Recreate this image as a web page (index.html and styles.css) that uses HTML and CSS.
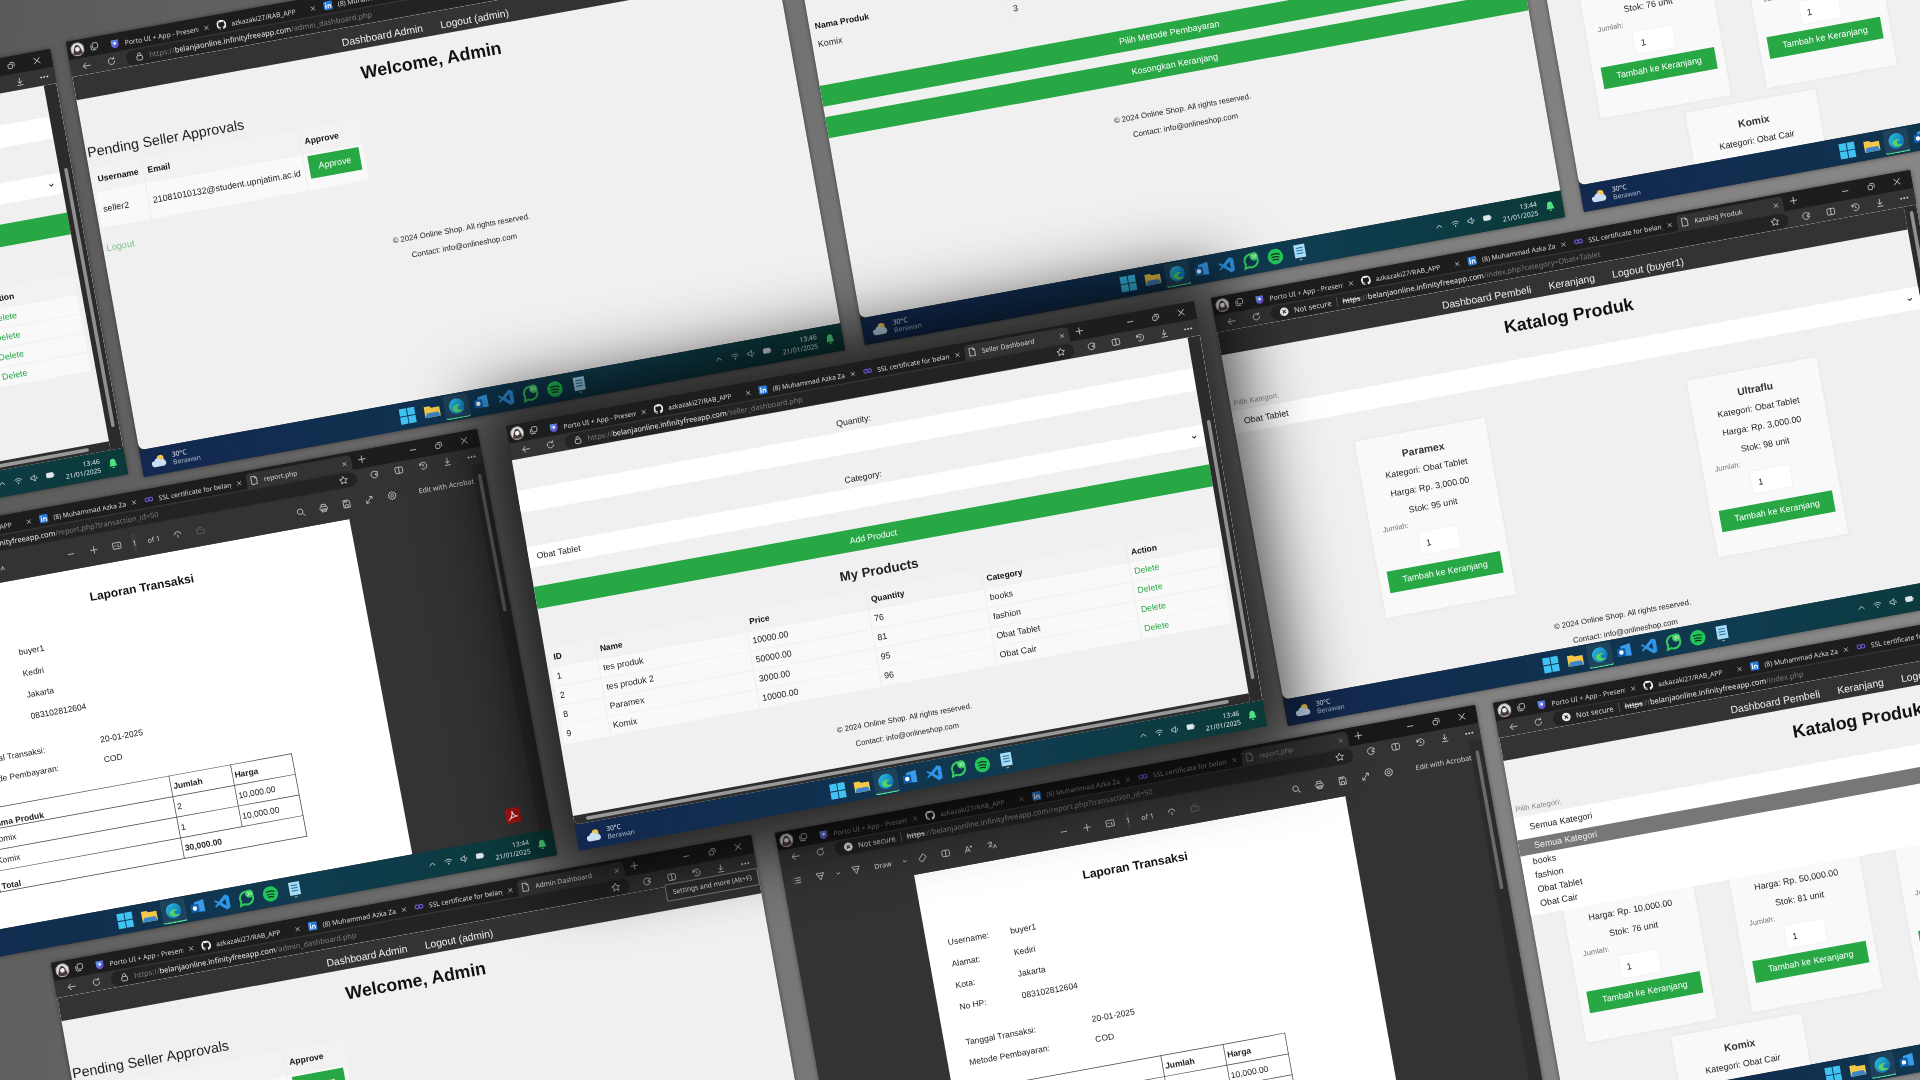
FILE: index.html
```html
<!DOCTYPE html>
<html lang="en">
<head>
    <meta charset="UTF-8">
    <title>Online Shop screens</title>
    <link rel="stylesheet" href="styles.css">
</head>
<body>
    <svg class="sprite" xmlns="http://www.w3.org/2000/svg">
        <defs>
            <linearGradient id="edgeFill" x1="0" y1="0" x2="1" y2="1"><stop offset="0" stop-color="#2bc4e0"/><stop offset="1" stop-color="#0a5fb0"/></linearGradient>
            <linearGradient id="portoFill" x1="0" y1="0" x2="1" y2="1"><stop offset="0" stop-color="#58a6f5"/><stop offset="1" stop-color="#6a2fc0"/></linearGradient>
        </defs>
        <symbol id="i-x" viewBox="0 0 16 16"><path d="M3 3l10 10M13 3L3 13"/></symbol>
        <symbol id="i-plus" viewBox="0 0 16 16"><path d="M8 2v12M2 8h12"/></symbol>
        <symbol id="i-min" viewBox="0 0 16 16"><path d="M3 8h10"/></symbol>
        <symbol id="i-restore" viewBox="0 0 16 16"><rect x="3" y="6" width="7" height="7" rx="1.5"/><path d="M6 3.5h5a2 2 0 0 1 2 2v5"/></symbol>
        <symbol id="i-back" viewBox="0 0 16 16"><path d="M14 8H3M7 3L2 8l5 5"/></symbol>
        <symbol id="i-refresh" viewBox="0 0 16 16"><path d="M13 8a5 5 0 1 1-1.5-3.5M12.5 1.5v3.2H9.3"/></symbol>
        <symbol id="i-lock" viewBox="0 0 16 16"><rect x="3.5" y="7" width="9" height="7" rx="1.5"/><path d="M5.5 7V5a2.5 2.5 0 0 1 5 0v2"/></symbol>
        <symbol id="i-nosec" viewBox="0 0 16 16"><circle cx="8" cy="8" r="7" fill="#e6e6e6" stroke="none"/><path d="M5.5 5.5l5 5M10.5 5.5l-5 5" stroke="#222" stroke-width="1.6"/></symbol>
        <symbol id="i-star" viewBox="0 0 16 16"><path d="M8 1.8l1.9 4 4.3.5-3.2 3 .9 4.3L8 11.4l-3.9 2.2.9-4.3-3.2-3 4.3-.5z"/></symbol>
        <symbol id="i-ext" viewBox="0 0 16 16"><path d="M11 3.5A5.5 5.5 0 1 0 13 9H9.5V6.5H13V3.5z"/></symbol>
        <symbol id="i-split" viewBox="0 0 16 16"><rect x="2" y="3" width="12" height="10" rx="2"/><path d="M8 3v10"/></symbol>
        <symbol id="i-history" viewBox="0 0 16 16"><path d="M3 8a5.5 5.5 0 1 1 1.6 3.9M3 3v3h3M8 5v3.3l2 1.2"/></symbol>
        <symbol id="i-download" viewBox="0 0 16 16"><path d="M8 2v9M4.5 7.5L8 11l3.5-3.5M3 14h10"/></symbol>
        <symbol id="i-more" viewBox="0 0 16 16"><circle cx="3" cy="8" r="1" fill="currentColor"/><circle cx="8" cy="8" r="1" fill="currentColor"/><circle cx="13" cy="8" r="1" fill="currentColor"/></symbol>
        <symbol id="i-doc" viewBox="0 0 16 16"><path d="M3.5 1.5h6l3 3v10h-9zM9.5 1.5v3h3"/></symbol>
        <symbol id="i-avatar" viewBox="0 0 16 16"><circle cx="8" cy="8" r="7.5" fill="#ddd" stroke="#888" stroke-width="1"/><path d="M2.5 12.5C4 8 5 3 8 3s4 5 5.5 9.5C11 15 5 15 2.5 12.5z" fill="#4a3a36" stroke="none"/><circle cx="8" cy="8" r="2.6" fill="#eee" stroke="none"/></symbol>
        <symbol id="i-space" viewBox="0 0 16 16"><rect x="5" y="2.5" width="8.5" height="8.5" rx="2"/><path d="M2.5 5.5v6a2 2 0 0 0 2 2h6"/></symbol>
        <symbol id="i-porto" viewBox="0 0 16 16"><path d="M2 1.5h12v8c0 3-3 4.500-6 5.500-3-1-6-2.500-6-5.500z" fill="url(#portoFill)" stroke="none"/><circle cx="8" cy="7" r="2.200" fill="#fff" stroke="none"/></symbol>
        <symbol id="i-github" viewBox="0 0 16 16"><path fill="#eee" stroke="none" d="M8 0C3.58 0 0 3.58 0 8c0 3.54 2.29 6.53 5.47 7.59.4.07.55-.17.55-.38 0-.19-.01-.82-.01-1.49-2.01.37-2.53-.49-2.69-.94-.09-.23-.48-.94-.82-1.13-.28-.15-.68-.52-.01-.53.63-.01 1.08.58 1.23.82.72 1.21 1.87.87 2.33.66.07-.52.28-.87.51-1.07-1.78-.2-3.64-.89-3.64-3.95 0-.87.31-1.59.82-2.15-.08-.2-.36-1.02.08-2.12 0 0 .67-.21 2.2.82.64-.18 1.32-.27 2-.27.68 0 1.36.09 2 .27 1.53-1.04 2.2-.82 2.2-.82.44 1.1.16 1.92.08 2.12.51.56.82 1.27.82 2.15 0 3.07-1.87 3.75-3.65 3.95.29.25.54.73.54 1.48 0 1.07-.01 1.93-.01 2.2 0 .21.15.46.55.38A8.013 8.013 0 0016 8c0-4.42-3.58-8-8-8z"/></symbol>
        <symbol id="i-linkedin" viewBox="0 0 16 16"><rect x="1" y="1" width="14" height="14" rx="2" fill="#2a7bd6" stroke="none"/><rect x="3.500" y="6.500" width="2" height="6" fill="#fff" stroke="none"/><rect x="3.500" y="3.500" width="2" height="2" fill="#fff" stroke="none"/><path d="M8 12.500V6.500M8 9c0-2.500 4-2.500 4 0v3.500" stroke="#fff" stroke-width="1.700"/></symbol>
        <symbol id="i-inf" viewBox="0 0 16 16"><circle cx="4.800" cy="8" r="3" stroke="#6f55d8" stroke-width="1.800"/><circle cx="11.200" cy="8" r="3" stroke="#6f55d8" stroke-width="1.800"/></symbol>
        <symbol id="i-win" viewBox="0 0 16 16"><g fill="#3fc3f2" stroke="none"><rect x="1" y="1" width="6.600" height="6.600"/><rect x="8.400" y="1" width="6.600" height="6.600"/><rect x="1" y="8.400" width="6.600" height="6.600"/><rect x="8.400" y="8.400" width="6.600" height="6.600"/></g></symbol>
        <symbol id="i-folder" viewBox="0 0 16 16"><path d="M1 3h5l1.500 1.500H15V13H1z" fill="#f5c84a" stroke="none"/><path d="M3 9h10l2 4H1z" fill="#3a86c8" stroke="none"/></symbol>
        <symbol id="i-edge" viewBox="0 0 16 16"><circle cx="8" cy="8" r="7" fill="url(#edgeFill)" stroke="none"/><path d="M4 10c0-3 6-5 8-2-2-1-4 0-3.500 2s3 2 5 1c-2 4-9 3-9.500-1z" fill="#56d26a" stroke="none"/></symbol>
        <symbol id="i-outlook" viewBox="0 0 16 16"><path d="M5 3l9-1.500V13l-9-1z" fill="#3a9be8" stroke="none"/><rect x="1.500" y="5" width="7.500" height="7.500" rx="1" fill="#0f5fae" stroke="none"/><circle cx="5.200" cy="8.700" r="2" fill="#fff" stroke="none"/></symbol>
        <symbol id="i-vscode" viewBox="0 0 16 16"><path d="M11.500 1L15 2.700v10.600L11.500 15 5 9.300 2.300 11.300 1 10.500 3.800 8 1 5.500l1.300-.8L5 6.700zM11.500 4.800L7.700 8l3.800 3.200z" fill="#2f95e6" stroke="none"/></symbol>
        <symbol id="i-whatsapp" viewBox="0 0 16 16"><path d="M2 14l1-3.500a6 6 0 1 1 2.500 2.500z" stroke="#35c95e" stroke-width="1.800"/><circle cx="11.300" cy="4.200" r="3.800" fill="#35c95e" stroke="none"/><text x="11.300" y="5.800" text-anchor="middle" font-size="4.500" fill="#fff" stroke="none" font-family="Liberation Sans, sans-serif">30</text></symbol>
        <symbol id="i-spotify" viewBox="0 0 16 16"><circle cx="8" cy="8" r="7" fill="#22c55a" stroke="none"/><path d="M4 6c3-1 6-.8 8.200.5M4.500 8.500c2.500-.7 5-.5 7 .6M5 10.800c2-.5 4-.4 5.700.5" stroke="#10321e" stroke-width="1.100"/></symbol>
        <symbol id="i-notes" viewBox="0 0 16 16"><rect x="3" y="1" width="10" height="12" fill="#a9dcf5" stroke="none"/><path d="M5 4h6M5 6.500h6M5 9h6" stroke="#1d6da0" stroke-width=".9"/><rect x="6.800" y="14.200" width="2.400" height="1.200" fill="#999" stroke="none"/></symbol>
        <symbol id="i-up" viewBox="0 0 16 16"><path d="M3 10.500L8 5.500l5 5"/></symbol>
        <symbol id="i-down" viewBox="0 0 16 16"><path d="M3 5.500l5 5 5-5" stroke-width="2.400"/></symbol>
        <symbol id="i-wifi" viewBox="0 0 16 16"><path d="M1.500 6.500c4-3.500 9-3.500 13 0M4 9c2.500-2 5.500-2 8 0"/><circle cx="8" cy="12" r="1.300" fill="currentColor" stroke="none"/></symbol>
        <symbol id="i-speaker" viewBox="0 0 16 16"><path d="M2 6h3l4-3.500v11L5 10H2zM11.500 5.500c1.500 1.500 1.500 3.500 0 5"/></symbol>
        <symbol id="i-battery" viewBox="0 0 16 16"><rect x="1" y="4" width="12" height="8" rx="1.500" fill="currentColor"/><path d="M14.500 6.500v3"/></symbol>
        <symbol id="i-bell" viewBox="0 0 16 16"><path d="M8 1.500c3 0 4 2.500 4 5 0 3 1.500 4.500 1.500 5.500h-11c0-1 1.500-2.500 1.500-5.500 0-2.500 1-5 4-5z" fill="#4fe07f" stroke="none"/><rect x="6.500" y="13" width="3" height="1.800" fill="#4fe07f" stroke="none"/></symbol>
        <symbol id="i-weather" viewBox="0 0 16 16"><circle cx="9.500" cy="6" r="3.500" fill="#f3c34c" stroke="none"/><path d="M3 14a3 3 0 0 1 0-6 3.800 3.800 0 0 1 7-.5 3.300 3.300 0 0 1 2.500 6.500z" fill="#c9def2" stroke="none"/></symbol>
        <symbol id="i-acrobat" viewBox="0 0 16 16"><rect x="0" y="0" width="16" height="16" rx="2" fill="#a31414" stroke="none"/><path d="M3 12.500c3-1.500 4.500-5 4.500-9 .5 4 2.500 5.800 5.500 6-4-.2-7.500.8-10 3z" stroke="#fff" stroke-width="1"/></symbol>
        <symbol id="i-list" viewBox="0 0 16 16"><path d="M5 4h9M5 8h9M5 12h9M2 4h1M2 8h1M2 12h1"/></symbol>
        <symbol id="i-draw" viewBox="0 0 16 16"><path d="M2 3h12L8 14zM4.500 7h7"/></symbol>
        <symbol id="i-erase" viewBox="0 0 16 16"><path d="M9 2l5 5-6 7H5L2 10z"/></symbol>
        <symbol id="i-aa" viewBox="0 0 16 16"><path d="M2 13L6 3l4 10M3.500 10h5M12 2.500v4M10 4.500h4"/></symbol>
        <symbol id="i-lang" viewBox="0 0 16 16"><path d="M2 4h7M5.500 2v2M8 4c-.5 4-3 6.500-6 7.500M3.500 6.500c1 2.500 3 4 5 5M10 14l2.500-6 2.500 6"/></symbol>
        <symbol id="i-fit" viewBox="0 0 16 16"><rect x="1.500" y="3" width="13" height="10" rx="1"/><path d="M4 8h3M10 6v4h2"/></symbol>
        <symbol id="i-rotate" viewBox="0 0 16 16"><path d="M3 8a5 5 0 1 1 10 0M8 8v5M8 8h.1"/></symbol>
        <symbol id="i-pages" viewBox="0 0 16 16"><path d="M2 5h5l1.500 1.500H14V13H2zM5 3h5l1.500 1.500"/></symbol>
        <symbol id="i-search" viewBox="0 0 16 16"><circle cx="7" cy="7" r="4.500"/><path d="M10.500 10.500L14.500 14.500"/></symbol>
        <symbol id="i-print" viewBox="0 0 16 16"><rect x="2" y="5.500" width="12" height="6" rx="2"/><path d="M4.500 5.500V2h7v3.500M4.500 9.500h7V14h-7z"/></symbol>
        <symbol id="i-save" viewBox="0 0 16 16"><path d="M3 2h8l2.500 2.500V14H3zM5.500 2v3h4V2M5.500 14V9.500h5V14"/></symbol>
        <symbol id="i-expand" viewBox="0 0 16 16"><path d="M3 13L13 3M8.500 3H13v4.500M7.500 13H3V8.500"/></symbol>
        <symbol id="i-gear" viewBox="0 0 16 16"><circle cx="8" cy="8" r="2.300"/><path d="M8 1.500l1.500 1.600 2.200-.3.500 2.200 2 1-1 2 1 2-2 1-.5 2.200-2.200-.3L8 14.500l-1.500-1.600-2.200.3-.5-2.200-2-1 1-2-1-2 2-1 .5-2.200 2.200.3z"/></symbol>
    </svg>

    <template id="chrome">
        <div class="chrome">
            <div class="tabbar">
                <svg class="ic avatar"><use href="#i-avatar"/></svg>
                <svg class="ic space"><use href="#i-space"/></svg>
                <div class="tab"><svg class="ic"><use href="#i-porto"/></svg><span>Porto UI + App - Present</span><svg class="ic close"><use href="#i-x"/></svg></div>
                <div class="tab"><svg class="ic"><use href="#i-github"/></svg><span>azkazaki27/RAB_APP</span><svg class="ic close"><use href="#i-x"/></svg></div>
                <div class="tab"><svg class="ic"><use href="#i-linkedin"/></svg><span>(8) Muhammad Azka Zai</span><svg class="ic close"><use href="#i-x"/></svg></div>
                <div class="tab"><svg class="ic"><use href="#i-inf"/></svg><span>SSL certificate for belanj</span><svg class="ic close"><use href="#i-x"/></svg></div>
                <div class="tab tab-active"><svg class="ic"><use href="#i-doc"/></svg><span class="js-title"></span><svg class="ic close"><use href="#i-x"/></svg></div>
                <svg class="ic new-tab"><use href="#i-plus"/></svg>
                <div class="win-ctl">
                    <svg class="ic"><use href="#i-min"/></svg>
                    <svg class="ic"><use href="#i-restore"/></svg>
                    <svg class="ic"><use href="#i-x"/></svg>
                </div>
            </div>
            <div class="addr">
                <svg class="ic"><use href="#i-back"/></svg>
                <svg class="ic"><use href="#i-refresh"/></svg>
                <div class="pill">
                    <svg class="ic lock"><use href="#i-lock"/></svg>
                    <svg class="ic nosec-icon"><use href="#i-nosec"/></svg>
                    <span class="nosec-text">Not secure</span>
                    <span class="url"><span class="url-scheme">https</span><span class="url-sep">://</span><b>belanjaonline.infinityfreeapp.com</b><span class="js-path url-sep"></span></span>
                    <svg class="ic fav"><use href="#i-star"/></svg>
                </div>
                <div class="addr-tools">
                    <svg class="ic"><use href="#i-ext"/></svg>
                    <svg class="ic"><use href="#i-split"/></svg>
                    <svg class="ic"><use href="#i-history"/></svg>
                    <svg class="ic"><use href="#i-download"/></svg>
                    <svg class="ic"><use href="#i-more"/></svg>
                </div>
            </div>
        </div>
    </template>

    <template id="taskbar">
        <div class="taskbar">
            <div class="weather">
                <svg class="ic"><use href="#i-weather"/></svg>
                <div><div>30°C</div><div class="weather-sub">Berawan</div></div>
            </div>
            <div class="apps">
                <svg class="ic"><use href="#i-win"/></svg>
                <svg class="ic"><use href="#i-folder"/></svg>
                <span class="app-on"><svg class="ic"><use href="#i-edge"/></svg></span>
                <svg class="ic"><use href="#i-outlook"/></svg>
                <svg class="ic"><use href="#i-vscode"/></svg>
                <svg class="ic"><use href="#i-whatsapp"/></svg>
                <svg class="ic"><use href="#i-spotify"/></svg>
                <svg class="ic"><use href="#i-notes"/></svg>
            </div>
            <div class="tray">
                <svg class="ic"><use href="#i-up"/></svg>
                <svg class="ic"><use href="#i-wifi"/></svg>
                <svg class="ic"><use href="#i-speaker"/></svg>
                <svg class="ic"><use href="#i-battery"/></svg>
                <div class="clock"><div class="js-time"></div><div>21/01/2025</div></div>
                <svg class="ic"><use href="#i-bell"/></svg>
            </div>
        </div>
    </template>

    <template id="page-seller">
        <div class="page">
            <div class="page-col">
                <div class="page-body seller">
                    <label class="field-label">Quantity:</label>
                    <div class="band"></div>
                    <label class="field-label field-cat">Category:</label>
                    <div class="band band-select"><span>Obat Tablet</span><svg class="ic"><use href="#i-down"/></svg></div>
                    <div class="green-btn add-btn">Add Product</div>
                    <h2 class="seller-title">My Products</h2>
                    <table class="grid products">
                        <tr><th>ID</th><th>Name</th><th>Price</th><th>Quantity</th><th>Category</th><th>Action</th></tr>
                        <tr><td>1</td><td>tes produk</td><td>10000.00</td><td>76</td><td>books</td><td><a>Delete</a></td></tr>
                        <tr><td>2</td><td>tes produk 2</td><td>50000.00</td><td>81</td><td>fashion</td><td><a>Delete</a></td></tr>
                        <tr><td>8</td><td>Paramex</td><td>3000.00</td><td>95</td><td>Obat Tablet</td><td><a>Delete</a></td></tr>
                        <tr><td>9</td><td>Komix</td><td>10000.00</td><td>96</td><td>Obat Cair</td><td><a>Delete</a></td></tr>
                    </table>
                    <div class="footer seller-footer"><p>© 2024 Online Shop. All rights reserved.</p><p>Contact: info@onlineshop.com</p></div>
                </div>
                <div class="hscroll"><i></i></div>
            </div>
            <div class="vscroll"><i></i></div>
        </div>
    </template>

    <template id="page-admin">
        <div class="page">
            <div class="page-body">
                <nav class="topnav"><span>Dashboard Admin</span><span>Logout (admin)</span></nav>
                <h1 class="page-title">Welcome, Admin</h1>
                <h2 class="admin-sub">Pending Seller Approvals</h2>
                <table class="grid approvals">
                    <tr><th>Username</th><th>Email</th><th>Approve</th></tr>
                    <tr><td>seller2</td><td>21081010132@student.upnjatim.ac.id</td><td><span class="green-btn approve">Approve</span></td></tr>
                </table>
                <a class="admin-logout">Logout</a>
                <div class="footer admin-footer"><p>© 2024 Online Shop. All rights reserved.</p><p>Contact: info@onlineshop.com</p></div>
            </div>
        </div>
    </template>

    <template id="page-report">
        <div class="page page-pdf">
            <div class="pdf-main">
                <div class="pdf-bar">
                    <svg class="ic"><use href="#i-list"/></svg>
                    <svg class="ic"><use href="#i-draw"/></svg>
                    <svg class="ic tiny"><use href="#i-down"/></svg>
                    <svg class="ic"><use href="#i-draw"/></svg>
                    <span>Draw</span>
                    <svg class="ic tiny"><use href="#i-down"/></svg>
                    <svg class="ic"><use href="#i-erase"/></svg>
                    <svg class="ic"><use href="#i-split"/></svg>
                    <svg class="ic"><use href="#i-aa"/></svg>
                    <svg class="ic"><use href="#i-lang"/></svg>
                    <svg class="ic pdf-zoom"><use href="#i-min"/></svg>
                    <svg class="ic"><use href="#i-plus"/></svg>
                    <svg class="ic"><use href="#i-fit"/></svg>
                    <span class="page-box">1</span>
                    <span class="page-of">of 1</span>
                    <svg class="ic"><use href="#i-rotate"/></svg>
                    <svg class="ic pdf-off"><use href="#i-pages"/></svg>
                    <svg class="ic pdf-right"><use href="#i-search"/></svg>
                    <svg class="ic"><use href="#i-print"/></svg>
                    <svg class="ic"><use href="#i-save"/></svg>
                    <svg class="ic"><use href="#i-expand"/></svg>
                    <svg class="ic"><use href="#i-gear"/></svg>
                    <span class="pdf-edit">Edit with Acrobat</span>
                </div>
                <div class="pdf-view">
                    <div class="sheet">
                        <h3>Laporan Transaksi</h3>
                        <div class="info">
                            <span>Username:</span><span>buyer1</span>
                            <span>Alamat:</span><span>Kediri</span>
                            <span>Kota:</span><span>Jakarta</span>
                            <span>No HP:</span><span>083102812604</span>
                        </div>
                        <div class="info info-order">
                            <span>Tanggal Transaksi:</span><span>20-01-2025</span>
                            <span>Metode Pembayaran:</span><span>COD</span>
                        </div>
                        <table class="report">
                            <tr><th>Nama Produk</th><th>Jumlah</th><th>Harga</th></tr>
                            <tr><td>Komix</td><td>2</td><td>10,000.00</td></tr>
                            <tr><td>Komix</td><td>1</td><td>10,000.00</td></tr>
                            <tr><th>Total</th><th colspan="2">30,000.00</th></tr>
                        </table>
                    </div>
                    <svg class="ic acrobat"><use href="#i-acrobat"/></svg>
                </div>
            </div>
            <div class="vscroll vscroll-pdf"><i></i></div>
        </div>
    </template>

    <template id="page-cart">
        <div class="page">
            <div class="page-body cart">
                <table class="grid cart-table">
                    <tr><th>Nama Produk</th><th>Jumlah</th><th>Harga</th><th>Total</th></tr>
                    <tr><td>Komix</td><td>3</td><td>10,000.00</td><td>30,000.00</td></tr>
                </table>
                <div class="green-btn cart-btn">Pilih Metode Pembayaran</div>
                <div class="green-btn cart-btn">Kosongkan Keranjang</div>
                <div class="footer cart-footer"><p>© 2024 Online Shop. All rights reserved.</p><p>Contact: info@onlineshop.com</p></div>
            </div>
        </div>
    </template>

    <template id="page-tablet">
        <div class="page">
            <div class="page-body">
                <nav class="topnav"><span>Dashboard Pembeli</span><span>Keranjang</span><span>Logout (buyer1)</span></nav>
                <h1 class="page-title">Katalog Produk</h1>
                <label class="pick-label">Pilih Kategori:</label>
                <div class="band pick"><span>Obat Tablet</span><svg class="ic"><use href="#i-down"/></svg></div>
                <div class="cards cards-tablet">
                    <div class="card"><h4>Paramex</h4><p>Kategori: Obat Tablet</p><p>Harga: Rp. 3,000.00</p><p>Stok: 95 unit</p><label>Jumlah:</label><div class="qty">1</div><div class="green-btn">Tambah ke Keranjang</div></div>
                    <div class="card"><h4>Ultraflu</h4><p>Kategori: Obat Tablet</p><p>Harga: Rp. 3,000.00</p><p>Stok: 98 unit</p><label>Jumlah:</label><div class="qty">1</div><div class="green-btn">Tambah ke Keranjang</div></div>
                </div>
                <div class="footer tablet-footer"><p>© 2024 Online Shop. All rights reserved.</p><p>Contact: info@onlineshop.com</p></div>
            </div>
            <div class="vscroll vscroll-tablet"><i></i></div>
        </div>
    </template>

    <template id="page-all">
        <div class="page">
            <div class="page-body">
                <nav class="topnav"><span>Dashboard Pembeli</span><span>Keranjang</span><span>Logout (buyer1)</span></nav>
                <h1 class="page-title">Katalog Produk</h1>
                <label class="pick-label">Pilih Kategori:</label>
                <div class="band pick pick-open"><span>Semua Kategori</span>
                    <ul class="dropdown">
                        <li class="on">Semua Kategori</li>
                        <li>books</li>
                        <li>fashion</li>
                        <li>Obat Tablet</li>
                        <li>Obat Cair</li>
                    </ul>
                </div>
                <div class="cards cards-all">
                    <div class="card"><h4>tes produk</h4><p>Kategori: books</p><p>Harga: Rp. 10,000.00</p><p>Stok: 76 unit</p><label>Jumlah:</label><div class="qty">1</div><div class="green-btn">Tambah ke Keranjang</div></div>
                    <div class="card"><h4>tes produk 2</h4><p>Kategori: fashion</p><p>Harga: Rp. 50,000.00</p><p>Stok: 81 unit</p><label>Jumlah:</label><div class="qty">1</div><div class="green-btn">Tambah ke Keranjang</div></div>
                    <div class="card"><h4>Paramex</h4><p>Kategori: Obat Tablet</p><p>Harga: Rp. 3,000.00</p><p>Stok: 95 unit</p><label>Jumlah:</label><div class="qty">1</div><div class="green-btn">Tambah ke Keranjang</div></div>
                    <div class="card"><h4>Ultraflu</h4><p>Kategori: Obat Tablet</p><p>Harga: Rp. 3,000.00</p><p>Stok: 98 unit</p><label>Jumlah:</label><div class="qty">1</div><div class="green-btn">Tambah ke Keranjang</div></div>
                </div>
                <div class="cards cards-row2">
                    <div class="card"><h4>Komix</h4><p>Kategori: Obat Cair</p><p>Harga: Rp. 10,000.00</p><p>Stok: 96 unit</p></div>
                </div>
            </div>
        </div>
    </template>

    <div class="desk">
        <div class="win win-seller-left" data-page="seller" data-title="Seller Dashboard" data-path="/seller_dashboard.php" data-time="13:46"></div>
        <div class="win win-admin-top" data-page="admin" data-title="Admin Dashboard" data-path="/admin_dashboard.php" data-time="13:46"></div>
        <div class="win win-cart" data-page="cart" data-title="Keranjang" data-path="/cart.php" data-time="13:44"></div>
        <div class="win win-all-top" data-page="all" data-title="Katalog Produk" data-path="/index.php" data-time="13:44" data-nosec="1"></div>
        <div class="win win-tablet" data-page="tablet" data-title="Katalog Produk" data-path="/index.php?category=Obat+Tablet" data-time="13:44" data-nosec="1"></div>
        <div class="win win-all" data-page="all" data-title="Katalog Produk" data-path="/index.php" data-time="13:44" data-nosec="1"></div>
        <div class="win win-report-left" data-page="report" data-title="report.php" data-path="/report.php?transaction_id=50" data-time="13:44" data-nosec="1"></div>
        <div class="win win-report dim" data-page="report" data-title="report.php" data-path="/report.php?transaction_id=50" data-time="13:44" data-nosec="1"></div>
        <div class="win win-admin-bottom" data-page="admin" data-title="Admin Dashboard" data-path="/admin_dashboard.php" data-time="13:44">
            <div class="tip">Settings and more (Alt+F)</div>
        </div>
        <div class="win win-center" data-page="seller" data-title="Seller Dashboard" data-path="/seller_dashboard.php" data-time="13:46"></div>
    </div>

    <script src="script.js"></script>
</body>
</html>
```

FILE: styles.css
```css
* {
    box-sizing: border-box;
}
body {
    margin: 0;
    width: 1920px;
    height: 1080px;
    overflow: hidden;
    font-family: "Liberation Sans", Arial, sans-serif;
    font-size: 12.5px;
    color: #222;
    background: #6f6f6f;
}
.sprite {
    position: absolute;
    width: 0;
    height: 0;
}
.desk {
    position: relative;
    width: 1920px;
    height: 1080px;
    overflow: hidden;
    filter: blur(.4px);
    background: linear-gradient(100deg, #5a5a5a 0%, #777 45%, #8a8a8a 100%);
}
.ic {
    width: 14px;
    height: 14px;
    flex: none;
    fill: none;
    stroke: currentColor;
    stroke-width: 1.2;
}

/* window on the canvas, every one has its own matrix */
.win {
    position: absolute;
    left: 0;
    top: 0;
    width: 1000px;
    height: 620px;
    display: flex;
    flex-direction: column;
    background: #2b2b2b;
    transform-origin: 0 0;
    box-shadow: 0 0 6px rgba(0, 0, 0, .5);
}
.win-center {
    transform: matrix(.688, -.125, .1177, .6855, 506, 426);
    box-shadow: 0 0 100px 40px rgba(0, 0, 0, .75);
}
.win-admin-top { transform: matrix(.701, -.127, .1258, .7016, 66, 42); }
.win-cart { transform: matrix(.7, -.128, .1226, .6984, 789, -88); }
.win-all-top { transform: matrix(.7, -.128, .1226, .6984, 1508, -221); }
.win-tablet { transform: matrix(.699, -.128, .1242, .6903, 1211, 298); }
.win-all { transform: matrix(.7, -.128, .1242, .6984, 1493, 703); }
.win-report { transform: matrix(.7, -.128, .1242, .6935, 775, 833); }
.win-admin-bottom { transform: matrix(.7, -.128, .1258, .7016, 51, 963); }
.win-report-left { transform: matrix(.692, -.126, .129, .687, -215, 555); }
.win-seller-left { transform: matrix(.7, -.128, .1258, .6855, -650, 177); }

/* browser chrome */
.chrome {
    height: 50px;
    flex: none;
    font-family: "Noto Sans", sans-serif;
    color: #d8d8d8;
}
.tabbar {
    height: 26px;
    background: #1d1d1d;
    display: flex;
    align-items: center;
    padding-left: 4px;
    font-size: 9.5px;
}
.avatar {
    width: 20px;
    height: 20px;
}
.space {
    margin-left: 7px;
    margin-right: 11px;
}
.tab {
    width: 152px;
    height: 22px;
    margin-top: 4px;
    padding: 0 6px 0 4px;
    display: flex;
    align-items: center;
    gap: 7px;
    flex: none;
}
.tab span {
    flex: 1;
    overflow: hidden;
    white-space: nowrap;
}
.tab .close {
    width: 9px;
    height: 9px;
    stroke-width: 1.5;
}
.tab-active {
    background: #333;
    border-radius: 6px 6px 0 0;
}
.new-tab {
    margin-left: 8px;
}
.win-ctl {
    margin-left: auto;
    padding-right: 14px;
    display: flex;
    gap: 23px;
}
.addr {
    height: 24px;
    background: #333;
    display: flex;
    align-items: center;
    padding-left: 16px;
    gap: 21px;
}
.pill {
    width: 740px;
    height: 21px;
    margin-left: -7px;
    border-radius: 11px;
    background: #232323;
    display: flex;
    align-items: center;
    padding: 0 12px;
    gap: 7px;
    font-size: 10.5px;
    white-space: nowrap;
}
.pill .fav {
    margin-left: auto;
}
.url-scheme,
.url-sep {
    color: #7c7c7c;
}
.url b {
    font-weight: 400;
    color: #e8e8e8;
}
.nosec-icon,
.nosec-text {
    display: none;
}
.nosec .lock {
    display: none;
}
.nosec .nosec-icon {
    display: block;
}
.nosec .nosec-text {
    display: inline;
    padding-right: 8px;
    border-right: 1px solid #666;
}
.nosec .url-scheme {
    color: #eee;
    text-decoration: line-through;
}
.addr-tools {
    display: flex;
    gap: 21px;
    margin-left: -2px;
}
.dim .tabbar .tab:not(.tab-active),
.dim .url b,
.dim .tab-active {
    color: #8b8b8b;
}
.dim .tabbar {
    background: #181818;
}
.tip {
    position: absolute;
    z-index: 3;
    left: 868px;
    top: 47px;
    width: 132px;
    height: 24px;
    line-height: 22px;
    text-align: center;
    font-size: 9.5px;
    color: #ddd;
    background: #2d2d2d;
    border: 1px solid #999;
    font-family: "Noto Sans", sans-serif;
}

/* taskbar */
.taskbar {
    height: 38px;
    flex: none;
    display: flex;
    align-items: center;
    color: #dfe8ea;
    font-family: "Noto Sans", sans-serif;
    font-size: 9.5px;
    background: linear-gradient(90deg, #13284f 0%, #10304f 35%, #103c50 65%, #0a3a38 100%);
}
.weather {
    width: 362px;
    padding-left: 14px;
    display: flex;
    align-items: center;
    gap: 8px;
    line-height: 11px;
}
.weather .ic {
    width: 22px;
    height: 22px;
}
.weather-sub {
    color: #aab6c4;
}
.apps {
    display: flex;
    align-items: center;
}
.apps > .ic,
.app-on .ic {
    width: 25px;
    height: 25px;
    margin: 0 5px;
}
.app-on {
    display: flex;
    height: 34px;
    align-items: center;
    border-radius: 4px;
    background: rgba(255, 255, 255, .07);
    border-bottom: 2px solid #55e08a;
}
.tray {
    margin-left: auto;
    padding-right: 10px;
    display: flex;
    align-items: center;
    gap: 10px;
}
.tray .ic {
    width: 13px;
    height: 13px;
}
.clock {
    text-align: right;
    line-height: 13px;
    margin-left: 4px;
}
.tray .ic:last-child {
    width: 16px;
    height: 16px;
}

/* page area */
.page {
    flex: 1;
    min-height: 0;
    display: flex;
    overflow: hidden;
    background: #f0f0f0;
    border-radius: 0 0 0 9px;
}
.page-col {
    flex: 1;
    min-width: 0;
    display: flex;
    flex-direction: column;
}
.page-body {
    flex: 1;
    min-width: 0;
    min-height: 0;
}
.hscroll {
    height: 13px;
    flex: none;
    background: #2d2d2d;
    padding: 4px 30px 4px 18px;
}
.hscroll i {
    display: block;
    height: 5px;
    border-radius: 3px;
    background: #999;
}
.vscroll {
    width: 18px;
    flex: none;
    background: #2b2b2b;
    padding-top: 122px;
}
.vscroll i {
    display: block;
    width: 5px;
    height: 378px;
    margin: 0 auto;
    border-radius: 3px;
    background: #909090;
}
.vscroll-pdf {
    padding-top: 14px;
}
.vscroll-pdf i {
    background: #6a6a6a;
    height: 200px;
}
.vscroll-tablet {
    padding-top: 8px;
}
.topnav {
    height: 33px;
    background: #333;
    color: #eee;
    font-size: 14.5px;
    display: flex;
    justify-content: center;
    align-items: center;
    gap: 25px;
    padding-top: 6px;
}
.page-title {
    margin: 18px 0 0;
    font-size: 25px;
    line-height: 30px;
    text-align: center;
    color: #111;
}
.footer {
    text-align: center;
    font-size: 11px;
    line-height: 16px;
}
.footer p {
    margin: 0 0 8px;
}
.green-btn {
    display: block;
    height: 32px;
    line-height: 32px;
    text-align: center;
    color: #fff;
    background: #28a745;
}
.band {
    height: 32px;
    background: #fff;
}
.grid {
    border-collapse: collapse;
    background: #f9f9f9;
}
.grid th,
.grid td {
    text-align: left;
    padding: 0 6px;
    border-left: 1px solid #e8e8e8;
    border-bottom: 1px solid #ededed;
}
.grid th {
    font-size: 12px;
    color: #111;
    background: #f2f2f2;
}
.grid tr > :first-child {
    border-left: 0;
}

/* seller page */
.field-label {
    display: block;
    text-align: center;
    line-height: 16px;
    padding-top: 24px;
}
.band + .field-cat {
    padding-top: 29px;
}
.band-select {
    height: 30px;
    margin-top: 6px;
    padding: 0 10px 0 12px;
    display: flex;
    align-items: center;
    justify-content: space-between;
}
.band-select .ic,
.pick .ic {
    width: 9px;
    height: 9px;
}
.field-label + .band {
    margin-top: 5px;
}
.add-btn {
    margin-top: 28px;
}
.seller-title {
    margin: 22px 0 0;
    text-align: center;
    font-size: 19px;
    line-height: 22px;
}
.products {
    width: 970px;
    margin: 14px 0 0 5px;
    table-layout: fixed;
}
.products tr {
    height: 28px;
}
.products th:nth-child(1) { width: 67px; }
.products th:nth-child(2) { width: 217px; }
.products th:nth-child(3) { width: 177px; }
.products th:nth-child(4) { width: 168px; }
.products th:nth-child(5) { width: 210px; }
.products a {
    color: #28a745;
}
.seller-footer {
    margin-top: 41px;
}

/* admin page */
.admin-sub {
    margin: 15px 0 0 2px;
    font-size: 20px;
    font-weight: 400;
    line-height: 24px;
    color: #222;
}
.approvals {
    margin: 10px 0 0 4px;
}
.approvals tr:first-child {
    height: 34px;
}
.approvals tr:last-child {
    height: 52px;
}
.approvals td:nth-child(2) {
    width: 224px;
}
.approvals .approve {
    width: 73px;
    margin-top: 3px;
}
.approvals td:last-child {
    padding: 0 6px;
    vertical-align: top;
}
.admin-logout {
    display: block;
    margin: 20px 0 0 5px;
    line-height: 16px;
    font-size: 13px;
    color: #7cc48e;
}
.admin-footer {
    margin-top: 45px;
}

/* catalog */
.pick-label {
    display: block;
    margin: 16px 0 0 5px;
    font-size: 10.5px;
    line-height: 12px;
    color: #888;
}
.pick {
    position: relative;
    margin-top: 6px;
    padding: 0 10px 0 15px;
    display: flex;
    align-items: center;
    justify-content: space-between;
}
.pick-open {
    padding-left: 20px;
}
.dropdown {
    position: absolute;
    z-index: 2;
    left: 0;
    right: 0;
    top: 100%;
    margin: 0;
    padding: 0 0 5px;
    list-style: none;
    background: #fff;
}
.dropdown li {
    height: 20px;
    line-height: 20px;
    padding-left: 16px;
}
.dropdown .on {
    height: 23px;
    line-height: 22px;
    padding-left: 22px;
    background: #777;
    color: #eee;
}
.cards {
    display: flex;
}
.cards-tablet {
    margin-top: 41px;
    padding-left: 163px;
    gap: 289px;
}
.cards-tablet .qty {
    margin-bottom: 14px;
}
.cards-all {
    margin-top: 42px;
    padding-left: 46px;
    gap: 51px;
}
.cards-row2 {
    margin-top: 13px;
    padding-left: 164px;
}
.card {
    width: 186px;
    height: 256px;
    flex: none;
    padding: 21px 12px 0;
    text-align: center;
    background: #f9f9f9;
    box-shadow: 0 0 4px rgba(0, 0, 0, .08);
}
.card h4 {
    margin: 0;
    font-size: 14.5px;
    line-height: 16px;
    color: #333;
}
.card p {
    margin: 11px 0 0;
    line-height: 16px;
}
.card label {
    display: block;
    margin: 7px 0 0 5px;
    text-align: left;
    font-size: 10.5px;
    line-height: 12px;
    color: #777;
}
.qty {
    width: 58px;
    height: 34px;
    margin: 6px auto 8px;
    padding-left: 9px;
    line-height: 34px;
    text-align: left;
    background: #fff;
    border: 1px solid #eee;
}
.card .green-btn {
    height: 31px;
    line-height: 31px;
}
.tablet-footer {
    margin-top: 47px;
}

/* cart */
.cart {
    padding: 102px 6px 0 0;
}
.cart-table {
    width: 100%;
    margin-left: 2px;
    background: none;
}
.cart-table tr {
    height: 26px;
}
.cart-table th:first-child {
    width: 278px;
}
.cart-table th {
    background: none;
}
.cart-btn {
    height: 30px;
    line-height: 30px;
    margin-top: 15px;
    margin-right: -6px;
    padding-right: 6px;
}
.cart-table + .cart-btn {
    margin-top: 44px;
}
.cart-footer {
    margin-top: 40px;
}

/* pdf viewer */
.page-pdf {
    background: #333;
}
.pdf-main {
    flex: 1;
    min-width: 0;
    display: flex;
    flex-direction: column;
}
.pdf-bar {
    height: 44px;
    flex: none;
    display: flex;
    align-items: center;
    padding: 0 0 0 12px;
    gap: 19px;
    color: #d4d4d4;
    font-family: "Noto Sans", sans-serif;
    font-size: 10px;
    white-space: nowrap;
}
.pdf-bar .tiny {
    width: 7px;
    height: 7px;
    margin: 0 -4px;
}
.pdf-zoom {
    margin-left: 70px;
}
.page-box {
    width: 30px;
    height: 26px;
    line-height: 26px;
    text-align: center;
    background: #3f3f3f;
    border-radius: 3px;
    margin: 0 -3px;
}
.pdf-off {
    color: #666;
}
.pdf-right {
    margin-left: 112px;
}
.pdf-edit {
    margin-left: 12px;
}
.pdf-view {
    position: relative;
    flex: 1;
    min-height: 0;
    padding-left: 182px;
    overflow: hidden;
}
.sheet {
    width: 616px;
    height: 600px;
    padding: 34px 30px 0;
    background: #fff;
    color: #222;
    font-size: 12px;
}
.sheet h3 {
    margin: 0;
    text-align: center;
    font-size: 17px;
    line-height: 20px;
    color: #111;
}
.info {
    display: grid;
    grid-template-columns: 89px 1fr;
    grid-auto-rows: 31px;
    align-items: center;
    margin-top: 33px;
}
.info-order {
    grid-template-columns: 180px 1fr;
    grid-auto-rows: 29px;
    margin-top: 21px;
}
.report {
    width: 444px;
    margin-top: 25px;
    border-collapse: collapse;
    table-layout: fixed;
}
.report tr {
    height: 30px;
}
.report th,
.report td {
    border: 1px solid #444;
    text-align: left;
    padding: 0 3px;
}
.report tr:first-child th:first-child {
    width: 266px;
    vertical-align: bottom;
}
.report tr:last-child th:first-child {
    vertical-align: bottom;
}
.acrobat {
    position: absolute;
    right: 22px;
    bottom: 18px;
    width: 22px;
    height: 22px;
}
```

FILE: script.js
```js
// fills every window with the chrome, its page and the taskbar
document.querySelectorAll('.win').forEach(function (win) {
    const chrome = document.getElementById('chrome').content.cloneNode(true);
    const page = document.getElementById('page-' + win.dataset.page).content.cloneNode(true);
    const taskbar = document.getElementById('taskbar').content.cloneNode(true);

    chrome.querySelector('.js-title').textContent = win.dataset.title;
    chrome.querySelector('.js-path').textContent = win.dataset.path;
    taskbar.querySelector('.js-time').textContent = win.dataset.time;

    if (win.dataset.nosec) {
        win.classList.add('nosec');
    }
    win.append(chrome, page, taskbar);
});
```
